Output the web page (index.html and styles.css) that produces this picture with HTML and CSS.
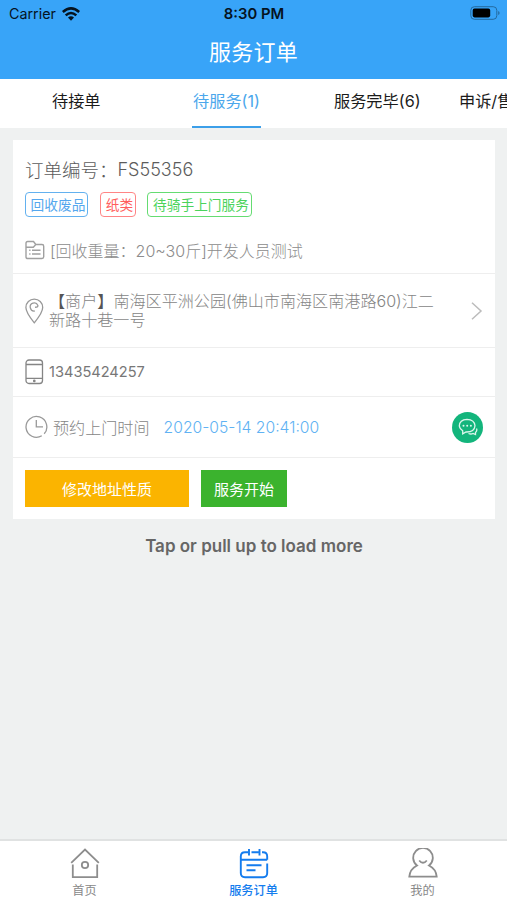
FILE: index.html
```
<!DOCTYPE html>
<html lang="zh-CN">
<head>
<meta charset="utf-8">
<title>服务订单</title>
<link rel="stylesheet" href="styles.css">
</head>
<body>
<div class="app">
  <header class="header">
    <div class="status">
      <div class="carrier"><span class="carrier-name">Carrier</span>
        <svg width="18" height="14" viewBox="0 0 18 14"><g fill="none" stroke="#05131f" stroke-width="2.6"><path d="M.8 5Q9-2.200 17.200 5"/><path d="M3.700 8.400Q9 3.600 14.300 8.400"/></g><path fill="#05131f" d="M6 10.600Q9 8 12 10.600L9 13.700Z"/></svg>
      </div>
      <div class="clock">8:30 PM</div>
      <div class="battery"><svg width="30" height="14" viewBox="0 0 30 14"><rect x=".8" y=".7" width="26" height="12.6" rx="3.6" fill="none" stroke="#246a9f"/><rect x="2.7" y="2.6" width="17.5" height="8.8" rx="1.8" fill="#000"/><path d="M28.2 5v4q1.4-.7 1.4-2t-1.4-2Z" fill="#246a9f"/></svg></div>
    </div>
    <h1 class="title">服务订单</h1>
  </header>
  <nav class="tabs">
    <div class="tab tab-first"><span>待接单</span></div>
    <div class="tab tab-active"><span>待服务(1)</span></div>
    <div class="tab tab-done"><span>服务完毕(6)</span></div>
    <div class="tab"><span>申诉/售</span></div>
  </nav>
  <main class="main">
    <section class="card">
      <div class="summary">
        <div class="order"><span>订单编号：</span><span class="order-no">FS55356</span></div>
        <div class="tags"><span class="tag blue">回收废品</span><span class="tag red">纸类</span><span class="tag green">待骑手上门服务</span></div>
        <div class="note">
          <svg width="20" height="20" viewBox="0 0 20 20" fill="none" stroke="#a0a0a0" stroke-width="1.4"><path d="M1 17V3.2Q1 1.5 2.7 1.5H8.500L10.800 4.500H17Q18.700 4.500 18.700 6.200V16.800Q18.700 18.500 17 18.500H2.700Q1 18.500 1 17ZM1 7.200H8.300L10.800 4.500M4.200 10.300H5.500M7 10.300H15.500M4.200 14H5.500M7 14H15.500"/></svg>
          <span class="note-text">[回收重量：<span class="weight">20~30斤]开发人员测试</span></span>
        </div>
      </div>
      <div class="row address">
        <svg class="pin" width="19" height="26" viewBox="0 0 19 26" fill="none" stroke="#999" stroke-width="1.3"><path d="M9.300 24.800Q.9 14.500 .9 9.500A8.200 8.200 0 0 1 17.700 9.500Q17.700 14.500 9.300 24.800Z"/><path d="M9.800 13A4 4 0 1 1 12.900 7.500Q13 9.500 10 9.200"/></svg>
        <div class="address-text"><div class="line-one"><span class="merchant">【</span>商户<span class="merchant">】</span>南海区平洲公园(佛山市南海区南港路60)江二</div><div>新路十巷一号</div></div>
        <svg class="chevron" width="12" height="18" viewBox="0 0 12 18" fill="none" stroke="#bcbcbc" stroke-width="1.500"><path d="M1 .8 10 9 1 17.200"/></svg>
      </div>
      <div class="row phone">
        <svg width="19" height="26" viewBox="0 0 19 26" fill="none" stroke="#858585" stroke-width="1.300"><rect x="1" y="1" width="16.500" height="23.500" rx="3"/><path d="M1 5.500H17.500M1 19.300H17.500"/><circle cx="9.300" cy="21.900" r=".7" fill="#858585"/></svg>
        <span class="phone-no">13435424257</span>
      </div>
      <div class="row time">
        <svg width="23" height="24" viewBox="0 0 23 24" fill="none" stroke="#999" stroke-width="1.300"><path d="M16.800 20.800A10.400 10.400 0 1 1 19.200 18.800"/><path d="M11.300 5V11.800H18"/></svg>
        <span class="time-label">预约上门时间</span><span class="date">2020-05-14 20:41:00</span>
        <span class="chat"><svg width="20" height="18" viewBox="0 0 20 18" fill="none" stroke="#dcf6ec" stroke-width="1.300"><path d="M4.700 12.800V15.800L8 14Q16.500 14.300 17 7.800 16.500 1.500 9 1.300 1.500 1.700 1.300 7.800 1.500 10.800 4.700 12.800ZM10.500 15.500Q13 16.500 15 15.500L17.500 16.500V14.500Q19.500 12.800 18.500 10.500"/><g fill="#dcf6ec" stroke="none"><circle cx="5.500" cy="7.700" r="1"/><circle cx="9.200" cy="7.700" r="1"/><circle cx="12.900" cy="7.700" r="1"/></g></svg></span>
      </div>
      <div class="actions"><button class="btn edit">修改地址性质</button><button class="btn start">服务开始</button></div>
    </section>
    <div class="more">Tap or pull up to load more</div>
  </main>
  <footer class="bottom">
    <div class="item">
      <svg width="30" height="31" viewBox="0 0 30 31" fill="none" stroke="#8d8d8d" stroke-width="1.800"><path d="M1.200 14.800 15 1.500 28.800 14.800M2.800 16.500V29.200H27.200V16.500"/><circle cx="15" cy="17" r="3.200"/></svg>
      <span>首页</span>
    </div>
    <div class="item current">
      <svg width="30" height="31" viewBox="0 0 30 31" fill="none" stroke="#147cee" stroke-width="1.900"><path d="M28.200 11.800V8.500Q28.200 4.300 24 4.300H23M19.500 4.300H12.500M9 4.300H6Q1.800 4.300 1.800 8.500V25Q1.800 29.200 6 29.200H24Q28.200 29.200 28.200 25V15.500M1.800 11.800H28.200M10 1V7.500M20.500 1V7.500M7.500 17.300H22.500M7.500 22.300H16.500"/></svg>
      <span>服务订单</span>
    </div>
    <div class="item">
      <svg width="30" height="31" viewBox="0 0 30 31" fill="none" stroke="#8d8d8d" stroke-width="1.800"><path d="M9 17.500A9.800 9.800 0 1 1 21 17.500Q28 21 28.700 28.700H1.300Q2 21 9 17.500ZM11.200 12.500Q15 17 18.800 12.500"/></svg>
      <span>我的</span>
    </div>
  </footer>
</div>
</body>
</html>
```
FILE: styles.css
```
* { box-sizing: border-box; }
body { margin: 0; font-family: Inter, "Noto Sans CJK SC", sans-serif; background: #eff1f1; }
svg { display: block; flex: none; }
.app { width: 507px; height: 900px; display: flex; flex-direction: column; overflow: hidden; white-space: nowrap; }
.header { height: 79px; flex: none; background: #38a4f8; }
.status { height: 27px; display: grid; grid-template-columns: 1fr 1fr 1fr; align-items: center; padding: 0 8px 0 9px; color: #05131f; }
.carrier { display: flex; gap: 6px; align-items: center; font-size: 14.300px; }
.clock { text-align: center; font-size: 14.800px; font-weight: 600; }
.battery { justify-self: end; margin-top: -1px; margin-right: -1px; }
.title { margin: 0; height: 50px; line-height: 50px; text-align: center; color: #fff; font-size: 22px; font-weight: 400; letter-spacing: .3px; }
.tabs { height: 49px; flex: none; display: flex; background: #fff; color: #1b1b1b; font-size: 16.200px; }
.tab { flex: none; height: 49px; line-height: 45px; }
.tab-first { margin-left: 52px; width: 140px; }
.tab-active { width: 69px; margin-right: 73px; text-align: center; color: #4ba7ec; border-bottom: 2px solid #3c9fe9; }
.tab-done { width: 125px; }
.main { flex: 1; padding: 12px 12px 0 13px; }
.card { background: #fff; height: 379px; font-weight: 300; }
.summary { height: 134px; padding: 16px 12px 0; border-bottom: 1px solid #eee; }
.order { display: flex; height: 28px; line-height: 28px; font-size: 18.500px; color: #5c5c5c; }
.order-no { font-size: 18px; }
.tags { display: flex; gap: 12px; margin-top: 8px; }
.tag { height: 25px; width: 63px; line-height: 24px; border: 1px solid #63b1ef; border-radius: 4px; font-size: 13.700px; text-align: center; font-weight: 400; color: #55a7ee; padding-left: 3px; }
.tag.red { width: 36px; color: #ff5d5d; border-color: #ff8585; }
.tag.green { width: 105px; margin-left: -1px; color: #4bd35b; border-color: #65dc72; }
.note { display: flex; align-items: center; gap: 5px; height: 24px; margin-top: 21px; color: #8c8c8c; font-size: 16px; }
.row { display: flex; align-items: center; padding: 0 12px; border-bottom: 1px solid #eee; color: #858585; }
.address { height: 74px; }
.address-text { margin-left: 5px; padding-top: 1px; font-size: 16.100px; line-height: 19px; flex: 1; }
.merchant { color: #555; font-weight: 500; }
.phone { height: 49px; }
.phone-no { margin-left: 5px; font-size: 14.600px; font-weight: 400; color: #777; }
.time { height: 61px; }
.time-label { margin-left: 5px; font-size: 16.100px; }
.date { margin-left: 14px; font-size: 15.700px; color: #60b2f3; }
.chat { margin-left: auto; width: 31px; height: 31px; border-radius: 50%; background: #13b57c; display: grid; place-items: center; }
.actions { display: flex; gap: 12px; padding: 12px; }
.btn { height: 37px; border: 0; padding: 0; color: #fff; font: 400 15px Inter, "Noto Sans CJK SC", sans-serif; }
.edit { width: 164px; background: #fbb400; }
.start { width: 86px; background: #3bb32e; }
.more { margin-top: 15px; height: 24px; line-height: 24px; text-align: center; font-size: 17px; font-weight: 600; color: #666; }
.bottom { height: 61px; flex: none; display: grid; grid-template-columns: repeat(3, 1fr); background: #fff; border-top: 2px solid #e0e2e2; padding-top: 7px; }
.item { display: flex; flex-direction: column; align-items: center; color: #888; font-size: 12.200px; line-height: 18px; gap: 3px; }
.current { color: #147cee; font-weight: 500; }
```
